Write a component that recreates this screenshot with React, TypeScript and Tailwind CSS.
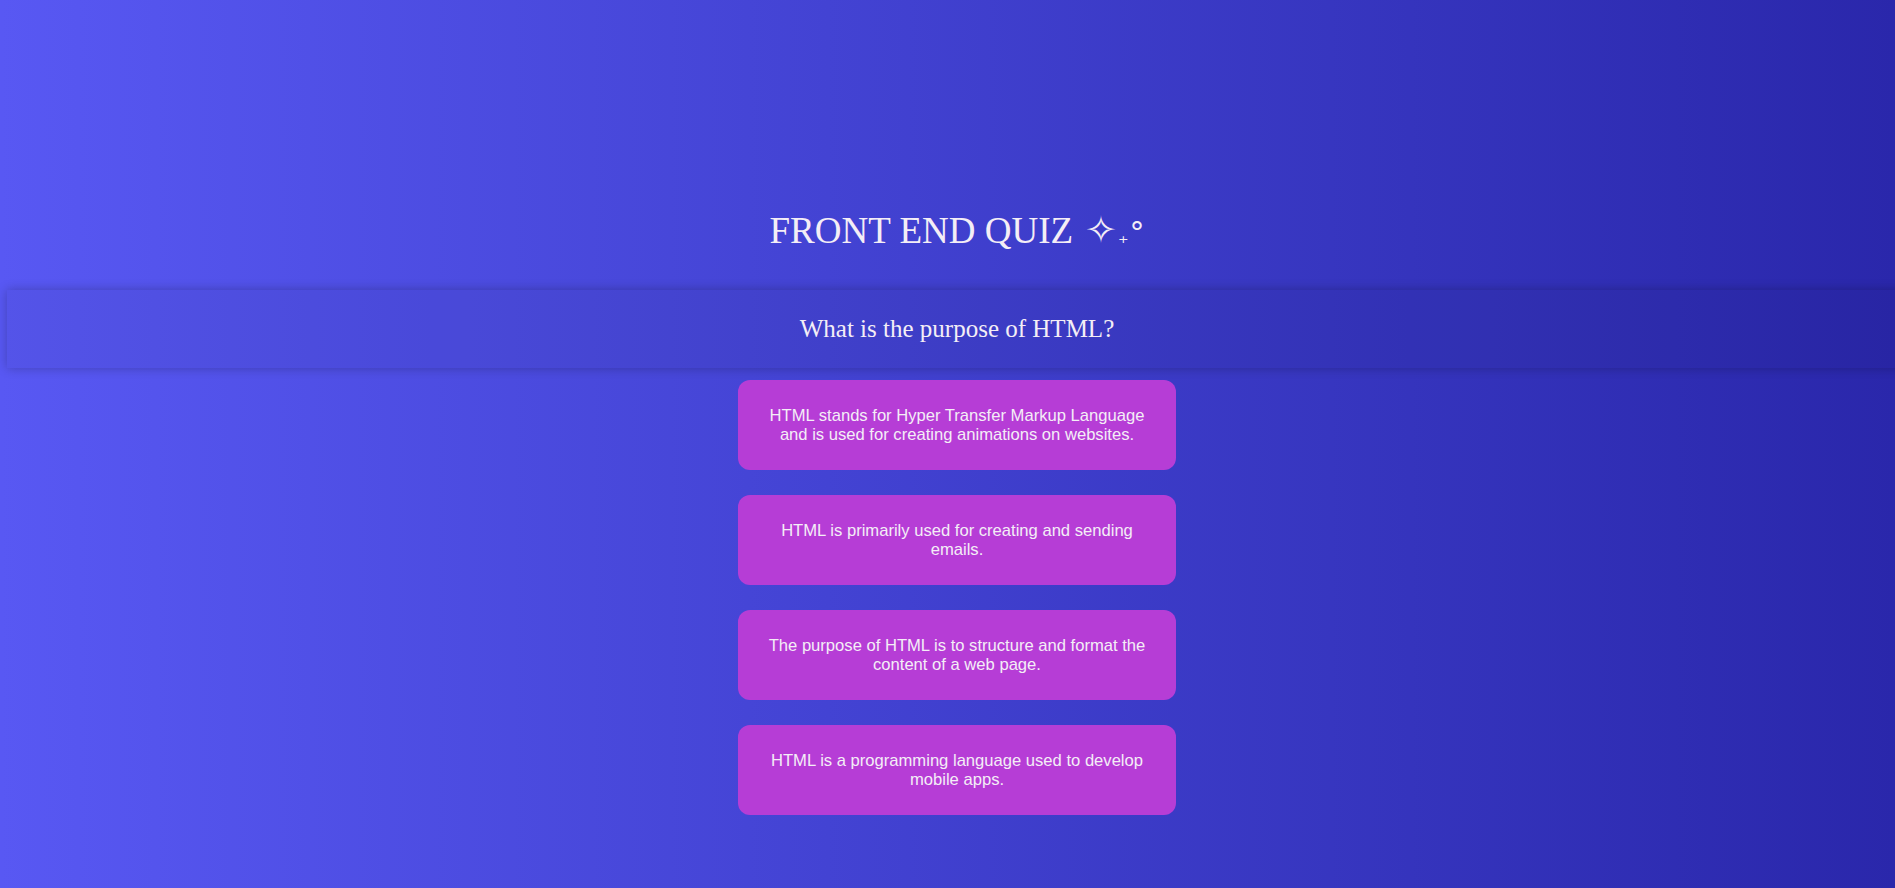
import React from 'react';

const answers = [
  'HTML stands for Hyper Transfer Markup Language and is used for creating animations on websites.',
  'HTML is primarily used for creating and sending emails.',
  'The purpose of HTML is to structure and format the content of a web page.',
  'HTML is a programming language used to develop mobile apps.',
];

export default function App() {
  return (
    <div className="min-h-[888px] w-full overflow-hidden bg-gradient-to-r from-[#5858f3] to-[#2a27ab] text-[#f4eef6]">
      <div className="w-[1914px] pt-[208px]">
        {/* Title */}
        <h1 className="flex h-[46px] items-baseline justify-center font-['Liberation_Serif',serif] text-[37px] leading-[46px]">
          <span>FRONT END QUIZ</span>
          <span className="ml-[12px] font-['DejaVu_Sans',sans-serif] text-[38px] leading-none">✧</span>
          <span className="ml-[1px] font-['DejaVu_Sans',sans-serif] text-[20px] leading-none">₊</span>
          <span className="ml-[1px] font-['DejaVu_Sans',sans-serif] text-[30px] leading-none">°</span>
        </h1>

        {/* Question */}
        <div className="ml-[7px] mt-[36px] flex h-[78px] w-[1900px] items-center justify-center bg-black/[0.04] shadow-[0_0_10px_rgba(0,0,0,0.25)]">
          <h2 className="font-['Liberation_Serif',serif] text-[25px]">What is the purpose of HTML?</h2>
        </div>

        {/* Answers */}
        <div className="mt-[12px] flex flex-col items-center gap-[25px] pb-[73px]">
          {answers.map((a) => (
            <button
              key={a}
              className="flex h-[90px] w-[438px] items-center justify-center rounded-[12px] bg-[#b63dd6] px-[20px] text-center font-['Liberation_Sans',Arial,sans-serif] text-[16.6px] leading-[19px] text-[#f4eef6]"
            >
              {a}
            </button>
          ))}
        </div>
      </div>
    </div>
  );
}
